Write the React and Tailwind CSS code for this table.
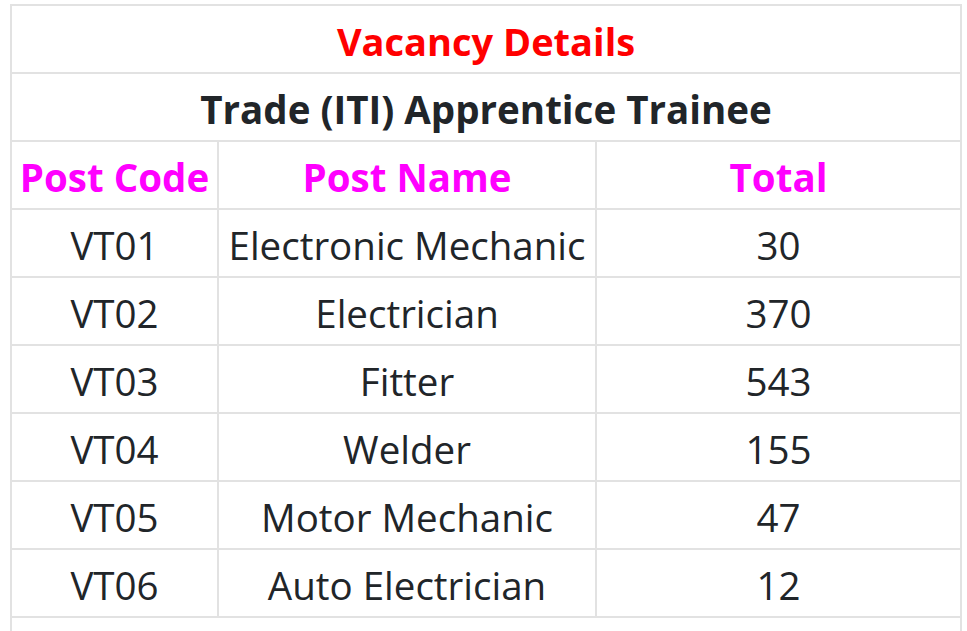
export default function App() {
  const rows = [
    ["VT01", "Electronic Mechanic", "30"],
    ["VT02", "Electrician", "370"],
    ["VT03", "Fitter", "543"],
    ["VT04", "Welder", "155"],
    ["VT05", "Motor Mechanic", "47"],
    ["VT06", "Auto Electrician", "12"],
  ];
  const cell = "border-2 border-[#e2e2e2] text-center align-middle p-0 whitespace-nowrap leading-none pt-[4px]";
  return (
    <div className="w-[967px] h-[631px] overflow-hidden bg-white pt-[4px] pl-[10px]" style={{ fontFamily: '"Open Sans", "Noto Sans", sans-serif' }}>
      <table className="border-collapse w-[950px] table-fixed text-[#212529]">
        <colgroup>
          <col className="w-[207px]" />
          <col className="w-[378px]" />
          <col className="w-[365px]" />
        </colgroup>
        <tbody>
          <tr className="h-[68px]">
            <td colSpan={3} className={`${cell} text-[#ff0000] font-bold text-[38px]`}>Vacancy Details</td>
          </tr>
          <tr className="h-[68px]">
            <td colSpan={3} className={`${cell} font-bold text-[38.5px]`}>Trade (ITI) Apprentice Trainee</td>
          </tr>
          <tr className="h-[68px]">
            <td className={`${cell} text-[#ff00ff] font-bold text-[38.5px]`}>Post Code</td>
            <td className={`${cell} text-[#ff00ff] font-bold text-[38.5px]`}>Post Name</td>
            <td className={`${cell} text-[#ff00ff] font-bold text-[38.5px]`}>Total</td>
          </tr>
          {rows.map((r) => (
            <tr key={r[0]} className="h-[68px]">
              <td className={`${cell} text-[38.5px]`}>{r[0]}</td>
              <td className={`${cell} text-[38.5px]`}>{r[1]}</td>
              <td className={`${cell} text-[38.5px]`}>{r[2]}</td>
            </tr>
          ))}
          <tr className="h-[68px]">
            <td colSpan={3} className={cell}></td>
          </tr>
        </tbody>
      </table>
    </div>
  );
}
